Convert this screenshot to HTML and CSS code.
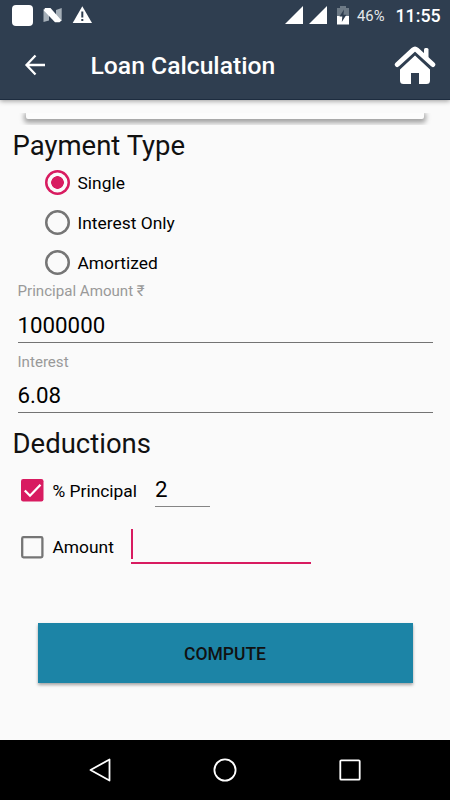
FILE: index.html
```html
<!DOCTYPE html>
<html lang="en">
<head>
<meta charset="utf-8">
<title>Loan Calculation</title>
<link rel="stylesheet" href="styles.css">
</head>
<body>
<div class="screen">
  <header class="header">
    <div class="status">
      <svg class="status-left" width="110" height="30" viewBox="0 0 110 30">
        <rect x="12" y="5" width="21" height="21" rx="4" fill="#fff"/>
        <path d="M43.500 9L49 12V20.500L43.500 22ZM56 10L61.700 8V21L56 18Z" fill="#a5afb8"/>
        <path d="M45 8H50.500L61.500 20.500L59.500 22.300H55L43.800 10.500Z" fill="#fff"/>
        <path d="M82.300 6.200L92 23H72.700Z" fill="#fff"/>
        <path d="M82.300 11.500V17.600M82.300 19V21" stroke="#2f3e50" stroke-width="2"/>
      </svg>
      <svg class="status-right" width="68" height="30" viewBox="282 0 68 30">
        <path d="M285 24L303 6V24ZM309 24L327 6V24Z" fill="#fff"/>
        <path d="M337 8H340V6H346V8H349V16H337Z" fill="#6d7a86"/>
        <path d="M337 16H349V24.500H337Z" fill="#fff"/>
        <path d="M344 9.500L339.500 16.500H342.300L341.800 22L346.400 14.800H343.500Z" fill="#2f3e50"/>
      </svg>
      <span class="battery">46%</span>
      <span class="clock">11:55</span>
    </div>
    <div class="toolbar">
      <svg class="back" width="24" height="24" viewBox="0 0 24 24"><path d="M22 12H4M12.500 2.500L3.500 12L12.500 21.500" fill="none" stroke="#fff" stroke-width="2.300"/></svg>
      <h1 class="title">Loan Calculation</h1>
      <svg class="home" width="42" height="40" viewBox="394 45 42 40">
        <path d="M424 54V49.500Q424 48 425.500 48H427Q428.500 48 428.500 49.500V58Z" fill="#fff"/>
        <path d="M397.300 64.500L413.200 49.900Q415 48.300 416.800 49.900L432.800 64.500" fill="none" stroke="#fff" stroke-width="5" stroke-linecap="round"/>
        <path d="M415 55.500L430 69.500V80.500Q430 84 426.500 84H419V73H411V84H403.500Q400 84 400 80.500V69.500Z" fill="#fff"/>
      </svg>
    </div>
  </header>
  <main class="content">
    <div class="card-clip"><div class="card"></div></div>
    <h2 class="heading">Payment Type</h2>
    <div class="radios">
      <div class="radio-row"><span class="radio checked"></span><span>Single</span></div>
      <div class="radio-row"><span class="radio"></span><span>Interest Only</span></div>
      <div class="radio-row"><span class="radio"></span><span>Amortized</span></div>
    </div>
    <div class="field"><div class="hint">Principal Amount ₹</div><div class="value">1000000</div></div>
    <div class="field"><div class="hint rate">Interest</div><div class="value">6.08</div></div>
    <h2 class="heading deductions">Deductions</h2>
    <div class="check-row">
      <svg class="box" width="23" height="23" viewBox="0 0 23 23"><rect width="22.500" height="22.500" rx="2.200" fill="#d81b60"/><path d="M3.800 11.500L9 16.700L19.500 5.800" fill="none" stroke="#fff" stroke-width="2.300"/></svg>
      <span class="check-label percent">% Principal</span>
      <div class="small-input">2</div>
    </div>
    <div class="check-row amount">
      <svg class="box" width="23" height="23" viewBox="0 0 23 23"><rect x="1.200" y="1.200" width="20.200" height="20.200" rx="1.300" fill="none" stroke="#757575" stroke-width="2.300"/></svg>
      <span class="check-label money">Amount</span>
      <div class="active-input"><span class="caret"></span></div>
    </div>
    <button class="compute">COMPUTE</button>
  </main>
  <nav class="nav">
    <svg width="24" height="26" viewBox="0 0 24 26"><path d="M21.500 2.500V23.500L2.500 13Z" fill="none" stroke="#fff" stroke-width="1.800" stroke-linejoin="round"/></svg>
    <svg width="24" height="26" viewBox="0 0 24 26"><circle cx="12" cy="13" r="10.600" fill="none" stroke="#fff" stroke-width="1.800"/></svg>
    <svg width="24" height="26" viewBox="0 0 24 26"><rect x="2.300" y="3.300" width="19.400" height="19.400" rx="1" fill="none" stroke="#fff" stroke-width="1.800"/></svg>
  </nav>
</div>
</body>
</html>
```
FILE: styles.css
```css
* { box-sizing: border-box; }
body { margin: 0; font-family: Roboto, "Noto Sans", sans-serif; color: #111; }
.screen { width: 450px; height: 800px; display: flex; flex-direction: column; background: #fafafa; overflow: hidden; }
.header { height: 100px; flex: none; background: #2f3e50; color: #fff; border-bottom: 1px solid #1d2c3f; box-shadow: 0 1px 5px rgba(0,0,0,.4); }
.status { height: 30px; display: flex; align-items: center; }
.status-right { margin-left: 172px; }
.battery { width: 45.500px; padding-left: 7px; font-size: 14.800px; line-height: 30px; color: #e5e8ea; padding-top: 1px; }
.clock { font-size: 17.800px; font-weight: 500; line-height: 30px; padding-top: 1px; }
.toolbar { height: 70px; display: flex; align-items: center; }
.back { margin-left: 23px; }
.title { margin: 0 0 0 43.500px; width: 303.500px; font-size: 24.700px; font-weight: 500; line-height: 70px; padding-top: 2px; white-space: nowrap; }
.home { flex: none; }
.content { height: 640px; flex: none; padding-top: 13px; }
.card-clip { height: 12px; overflow: hidden; padding: 0 26px; }
.card { height: 6px; border-radius: 0 0 2px 2px; background: #fcfcfc; box-shadow: 0 2px 5px 2px rgba(0,0,0,.35); }
.heading { height: 38px; margin: 0; padding: 3px 12.500px 0; font-size: 27.500px; font-weight: 400; line-height: 36px; }
.radio-row { height: 40px; display: flex; align-items: center; gap: 7.500px; padding-left: 45px; font-size: 17.400px; color: #000; }
.radio { width: 25px; height: 25px; margin-top: -1px; border-radius: 50%; box-shadow: inset 0 0 0 2.500px #757575; }
.radio.checked { box-shadow: inset 0 0 0 2.500px #d81b60; background: radial-gradient(circle, #d81b60 6px, transparent 6.600px); }
.field { height: 60px; margin: 0 17.500px 10px; border-bottom: 1px solid #737373; }
.hint { height: 16px; font-size: 15.100px; line-height: 16px; color: #999; }
.hint.rate { line-height: 18px; }
.value { height: 43px; font-size: 22.300px; line-height: 53px; color: #000; }
.heading.deductions { height: 42px; }
.check-row { height: 51px; display: flex; align-items: center; padding-left: 21px; font-size: 17.400px; color: #000; }
.box { flex: none; }
.check-label { padding-left: 8.500px; white-space: nowrap; }
.percent { width: 111px; }
.money { width: 87px; }
.small-input { width: 55px; height: 33px; font-size: 22.300px; line-height: 30px; border-bottom: 1px solid #858585; }
.amount { height: 62px; }
.active-input { width: 180px; height: 35px; margin-bottom: 2px; border-bottom: 2px solid #d81b60; }
.caret { display: block; width: 2px; height: 30px; background: #d81b60; }
.compute { display: block; width: 375px; height: 60px; margin: 45px 0 0 37.500px; border: 0; padding: 2px 0 0; background: #1c84a6; color: #111; font: 500 17.500px Roboto, sans-serif; box-shadow: 0 2px 3px rgba(0,0,0,.35); }
.nav { height: 60px; flex: none; display: flex; justify-content: space-between; align-items: center; padding: 0 88px; background: #000; }
```
